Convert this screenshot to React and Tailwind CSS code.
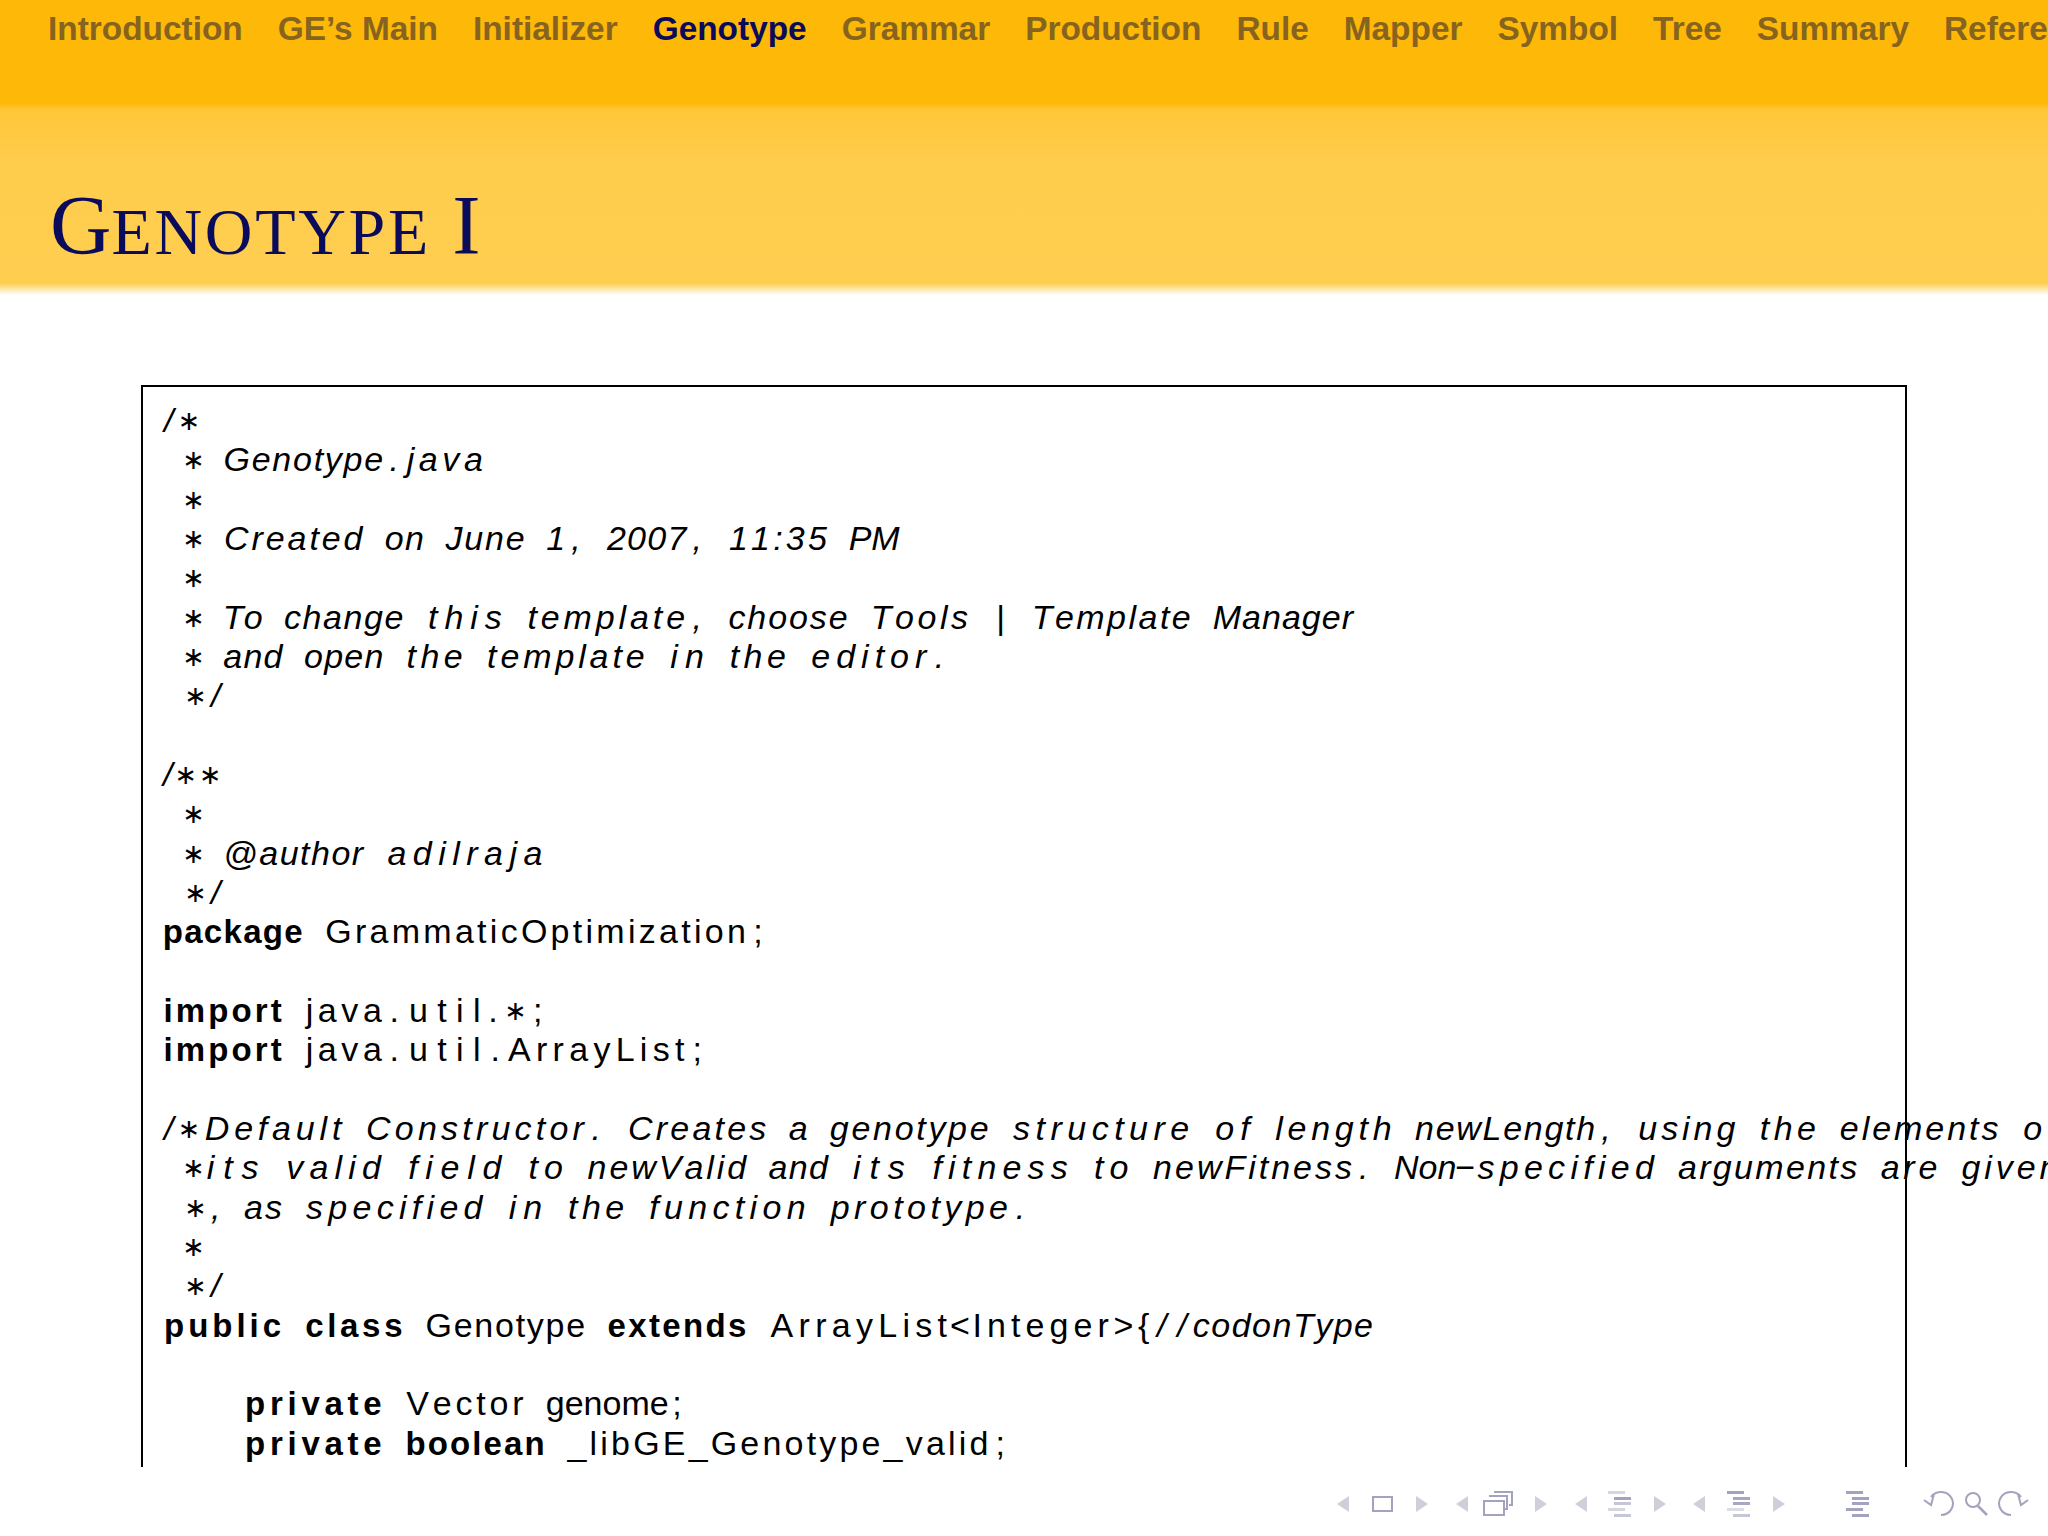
const COL = 20.2;

const navItems = [
  "Introduction",
  "GE’s Main",
  "Initializer",
  "Genotype",
  "Grammar",
  "Production",
  "Rule",
  "Mapper",
  "Symbol",
  "Tree",
  "Summary",
  "References",
];

// listing lines, one [text, style] pair per run: i = comment, b = keyword, n = plain
const listing = [
  [["/∗", "i"]],
  [[" ∗ Genotype.java", "i"]],
  [[" ∗", "i"]],
  [[" ∗ Created on June 1, 2007, 11:35 PM", "i"]],
  [[" ∗", "i"]],
  [[" ∗ To change this template, choose Tools | Template Manager", "i"]],
  [[" ∗ and open the template in the editor.", "i"]],
  [[" ∗/", "i"]],
  [],
  [["/∗∗", "i"]],
  [[" ∗", "i"]],
  [[" ∗ @author adilraja", "i"]],
  [[" ∗/", "i"]],
  [["package", "b"], [" GrammaticOptimization;", "n"]],
  [],
  [["import", "b"], [" java.util.∗;", "n"]],
  [["import", "b"], [" java.util.ArrayList;", "n"]],
  [],
  [["/∗Default Constructor. Creates a genotype structure of length newLength, using the elements of", "i"]],
  [[" ∗its valid field to newValid and its fitness to newFitness. Non−specified arguments are given", "i"]],
  [[" ∗, as specified in the function prototype.", "i"]],
  [[" ∗", "i"]],
  [[" ∗/", "i"]],
  [["public class", "b"], [" Genotype ", "n"], ["extends", "b"], [" ArrayList<Integer>{", "n"], ["//codonType", "i"]],
  [],
  [["    ", "n"], ["private", "b"], [" Vector genome;", "n"]],
  [["    ", "n"], ["private boolean", "b"], [" _libGE_Genotype_valid;", "n"]],
];

const runStyles = {
  i: "italic",
  b: "font-bold text-[33px]",
  n: "",
};

const TriLeft = ({ className = "" }) => (
  <svg width="12" height="16" viewBox="0 0 12 16" className={className}>
    <path d="M12 0 L0 8 L12 16 Z" fill="#cfcfd9" />
  </svg>
);

const TriRight = ({ className = "" }) => (
  <svg width="12" height="16" viewBox="0 0 12 16" className={className}>
    <path d="M0 0 L12 8 L0 16 Z" fill="#cfcfd9" />
  </svg>
);

const FrameIcon = ({ className = "" }) => (
  <svg width="21" height="16" viewBox="0 0 21 16" className={className}>
    <rect x="1" y="1" width="19" height="14" fill="none" stroke="#a3a3bf" strokeWidth="2" />
  </svg>
);

const StackIcon = ({ className = "" }) => (
  <svg width="30" height="25" viewBox="0 0 30 25" className={className}>
    <path d="M11 1 H29 V14 H26 M6 5 H24 V18 H21" fill="none" stroke="#a3a3bf" strokeWidth="2" />
    <rect x="1" y="10" width="20" height="14" fill="#fff" stroke="#a3a3bf" strokeWidth="2" />
  </svg>
);

const ListIcon = ({ colors, className = "" }) => (
  <svg width="24" height="26" viewBox="0 0 24 26" className={className}>
    <rect x="0" y="0" width="17" height="3" fill={colors[0]} />
    <rect x="6" y="6" width="17" height="3" fill={colors[1]} />
    <rect x="6" y="11" width="17" height="3" fill={colors[2]} />
    <rect x="0" y="17" width="17" height="3" fill={colors[3]} />
    <rect x="6" y="23" width="17" height="3" fill={colors[4]} />
  </svg>
);

const UndoIcon = ({ flip = false, className = "" }) => (
  <svg
    width="32"
    height="25"
    viewBox="0 0 32 25"
    className={`${flip ? "-scale-x-100" : ""} ${className}`}
  >
    <path
      d="M18 24 A12 11.5 0 1 0 8 6 M1 9 L8 14 L11 3"
      fill="none"
      stroke="#a3a3bf"
      strokeWidth="2"
    />
  </svg>
);

const SearchIcon = ({ className = "" }) => (
  <svg width="23" height="25" viewBox="0 0 23 25" className={className}>
    <circle cx="8" cy="9" r="7" fill="none" stroke="#a3a3bf" strokeWidth="2" />
    <path d="M13 15 L22 24" stroke="#a3a3bf" strokeWidth="2.5" />
  </svg>
);

// the listing is set on a column grid: a token takes one column per character
const Token = ({ text }) => (
  <span className="inline-flex shrink-0 justify-around" style={{ width: text.length * COL }}>
    {[...text].map((ch, idx) =>
      ch === "∗" ? (
        <span key={idx} className="font-['DejaVu_Sans'] font-normal not-italic text-[27px]">
          ∗
        </span>
      ) : (
        <span key={idx}>{ch}</span>
      ),
    )}
  </span>
);

const Run = ({ text, style }) => {
  const tokens = text.match(/[A-Za-z0-9_@:]+|\s|[^A-Za-z0-9_@:\s]+/g) ?? [];
  return (
    <span className={`flex ${runStyles[style]}`}>
      {tokens.map((token, idx) => (
        <Token key={idx} text={token} />
      ))}
    </span>
  );
};

export default function App() {
  return (
    <div className="flex h-[1536px] w-[2048px] flex-col overflow-hidden bg-white font-['Liberation_Sans',sans-serif] text-black">
      {/* header band */}
      <div className="h-[295px] shrink-0 bg-[linear-gradient(#fdb808_0,#fdb808_103px,#ffc638_110px,#ffcd4c_160px,#ffce50_283px,#fff_295px)]">
        <div className="flex gap-[35px] whitespace-nowrap pl-[48px] pt-[9px] text-[33.4px] font-bold leading-[40px] text-[#86641f]">
          {navItems.map((item) => (
            <span key={item} className={item === "Genotype" ? "text-[#0b0b5c]" : ""}>
              {item}
            </span>
          ))}
        </div>
        <div className="pl-[50px] pt-[126px] font-['Liberation_Serif',serif] leading-[100px] text-[#0b0b5c]">
          <span className="text-[85px]">G</span>
          <span className="text-[66px] tracking-[2.7px]">ENOTYPE</span>
          <span className="text-[85px]"> I</span>
        </div>
      </div>

      {/* listing */}
      <div className="flex-1 pl-[141px] pt-[90px]">
        <div className="h-[1082px] w-[1766px] border-2 border-b-0 border-black pl-[19px] pt-[14px] text-[34px]">
          {listing.map((line, idx) => (
            <div key={idx} className="flex h-[39.33px] items-center whitespace-pre leading-[39.33px]">
              {line.map(([text, style], runIdx) => (
                <Run key={runIdx} text={text} style={style} />
              ))}
            </div>
          ))}
        </div>
      </div>

      {/* beamer navigation symbols */}
      <div className="flex h-[69px] shrink-0 items-center pl-[1337px] pt-[4px]">
        <TriLeft />
        <FrameIcon className="ml-[23px]" />
        <TriRight className="ml-[23px]" />
        <TriLeft className="ml-[28px]" />
        <StackIcon className="ml-[15px]" />
        <TriRight className="ml-[22px]" />
        <TriLeft className="ml-[28px]" />
        <ListIcon className="ml-[21px]" colors={["#d6d6e0", "#a3a3bf", "#c6c6d6", "#d6d6e0", "#c6c6d6"]} />
        <TriRight className="ml-[22px]" />
        <TriLeft className="ml-[27px]" />
        <ListIcon className="ml-[22px]" colors={["#a3a3bf", "#a8a8c4", "#a8a8c4", "#dcdce4", "#c6c6d6"]} />
        <TriRight className="ml-[22px]" />
        <ListIcon className="ml-[61px]" colors={["#a3a3bf", "#a3a3bf", "#a3a3bf", "#a3a3bf", "#a3a3bf"]} />
        <UndoIcon className="ml-[53px]" />
        <SearchIcon className="ml-[10px]" />
        <UndoIcon className="ml-[9px]" flip />
      </div>
    </div>
  );
}
